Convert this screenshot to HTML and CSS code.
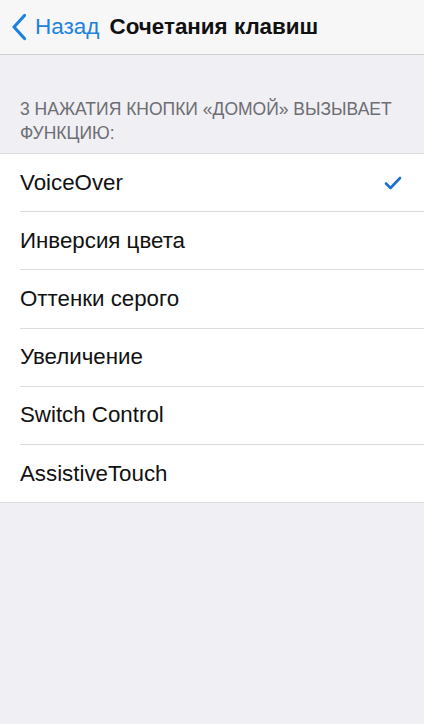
FILE: index.html
```html
<!DOCTYPE html>
<html lang="ru">
<head>
  <meta charset="UTF-8">
  <meta name="viewport" content="width=device-width, initial-scale=1.0">
  <title>Сочетания клавиш</title>
  <link rel="stylesheet" href="styles.css">
</head>
<body>
  <div class="nav-bar">
    <a class="back-btn" href="#">
      <svg class="chevron" width="16" height="28" viewBox="0 0 16 28">
        <path d="M13.5 2.5 L3 14 L13.5 25.5" fill="none" stroke="#1b82e0" stroke-width="3.2" stroke-linecap="round" stroke-linejoin="round"/>
      </svg>
      <span>Назад</span>
    </a>
    <h1 class="nav-title">Сочетания клавиш</h1>
  </div>

  <div class="section-header">3 нажатия кнопки «Домой» вызывает функцию:</div>

  <ul class="options">
    <li class="option">VoiceOver
      <svg class="check" width="18" height="14" viewBox="0 0 18 14">
        <path d="M2 7.5 L6.5 12 L16 2" fill="none" stroke="#1b6fd6" stroke-width="2.6" stroke-linecap="round" stroke-linejoin="round"/>
      </svg>
    </li>
    <li class="option">Инверсия цвета</li>
    <li class="option">Оттенки серого</li>
    <li class="option">Увеличение</li>
    <li class="option">Switch Control</li>
    <li class="option">AssistiveTouch</li>
  </ul>
</body>
</html>
```

FILE: styles.css
```css
body {
  background-color: #efeff4;
  margin: 0;
  padding: 0;
  font-family: "Liberation Sans", Arial, sans-serif;
  height: 724px;
}

.nav-bar {
  background-color: #f7f7f8;
  height: 54px;
  border-bottom: 1px solid #cfcfd2;
  display: flex;
  align-items: center;
  padding-left: 11px;
}

.back-btn {
  display: flex;
  align-items: center;
  gap: 8px;
  color: #1b82e0;
  text-decoration: none;
  font-size: 22.5px;
}

.nav-title {
  margin: 0 0 0 10px;
  font-size: 22.4px;
  font-weight: bold;
  color: #111;
}

.section-header {
  padding: 42px 20px 8px;
  font-size: 17.5px;
  line-height: 24px;
  color: #6d6d72;
  text-transform: uppercase;
}

.options {
  list-style: none;
  margin: 0;
  padding: 0 0 0 20px;
  background-color: #fff;
  border-top: 1px solid #dcdcdf;
  border-bottom: 1px solid #dcdcdf;
}

.option {
  height: 57.2px;
  display: flex;
  align-items: center;
  justify-content: space-between;
  padding-right: 22px;
  font-size: 22.3px;
  color: #111;
  border-bottom: 1px solid #dcdcdf;
}

.option:last-child {
  border-bottom: none;
}
```
